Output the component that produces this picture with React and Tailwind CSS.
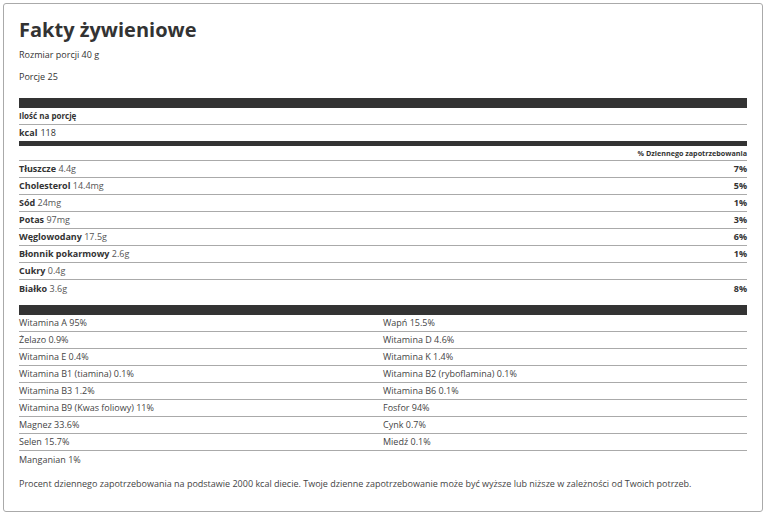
const nutrients = [
  { name: 'Tłuszcze', amount: '4.4g', dv: '7%' },
  { name: 'Cholesterol', amount: '14.4mg', dv: '5%' },
  { name: 'Sód', amount: '24mg', dv: '1%' },
  { name: 'Potas', amount: '97mg', dv: '3%' },
  { name: 'Węglowodany', amount: '17.5g', dv: '6%' },
  { name: 'Błonnik pokarmowy', amount: '2.6g', dv: '1%' },
  { name: 'Cukry', amount: '0.4g', dv: '' },
  { name: 'Białko', amount: '3.6g', dv: '8%' },
]

const vitamins = [
  'Witamina A 95%',
  'Wapń 15.5%',
  'Żelazo 0.9%',
  'Witamina D 4.6%',
  'Witamina E 0.4%',
  'Witamina K 1.4%',
  'Witamina B1 (tiamina) 0.1%',
  'Witamina B2 (ryboflamina) 0.1%',
  'Witamina B3 1.2%',
  'Witamina B6 0.1%',
  'Witamina B9 (Kwas foliowy) 11%',
  'Fosfor 94%',
  'Magnez 33.6%',
  'Cynk 0.7%',
  'Selen 15.7%',
  'Miedź 0.1%',
  'Manganian 1%',
]

export default function App() {
  return (
    <div className="w-[766px] h-[515px] bg-white p-[3px] text-[#333] font-['Open_Sans',sans-serif]">
      <div className="h-[509px] w-[760px] border border-[#aaa] rounded-[3px] px-[15px] pt-[12px]">
        <h1 className="text-[20px] leading-[28px] font-bold text-[#333]">Fakty żywieniowe</h1>
        <p className="mt-[4px] text-[9px] leading-[14px]">Rozmiar porcji 40 g</p>
        <p className="mt-[8px] text-[9px] leading-[14px]">Porcje 25</p>

        <div className="mt-[14px] h-[10px] bg-[#333]" />
        <div className="h-[17px] border-b border-[#aaa] flex items-center text-[8px] font-bold">Ilość na porcję</div>
        <div className="h-[16px] flex items-center text-[9px]">
          <span className="font-bold mr-[3px]">kcal</span>
          <span>118</span>
        </div>
        <div className="h-[5px] bg-[#333]" />
        <div className="h-[15px] border-b border-[#aaa] flex items-center justify-end text-[7.2px] font-bold">
          % Dziennego zapotrzebowania
        </div>
        {nutrients.map((n, i) => (
          <div
            key={n.name}
            className={`h-[17px] flex items-center justify-between text-[9px] ${i < nutrients.length - 1 ? 'border-b border-[#aaa]' : ''}`}
          >
            <span>
              <span className="font-bold">{n.name}</span> <span className="text-[#555]">{n.amount}</span>
            </span>
            <span className="font-bold">{n.dv}</span>
          </div>
        ))}

        <div className="mt-[8px] h-[10px] bg-[#333]" />
        <div className="grid grid-cols-2">
          {vitamins.map((v, i) => (
            <div
              key={v}
              className={`h-[17px] flex items-center text-[9px] text-[#444] ${i < 16 ? 'border-b border-[#aaa]' : ''}`}
            >
              {v}
            </div>
          ))}
        </div>

        <p className="mt-[9px] text-[9px] leading-[14px] text-[#444]">
          Procent dziennego zapotrzebowania na podstawie 2000 kcal diecie. Twoje dzienne zapotrzebowanie może być wyższe lub niższe w zależności od Twoich potrzeb.
        </p>
      </div>
    </div>
  )
}
